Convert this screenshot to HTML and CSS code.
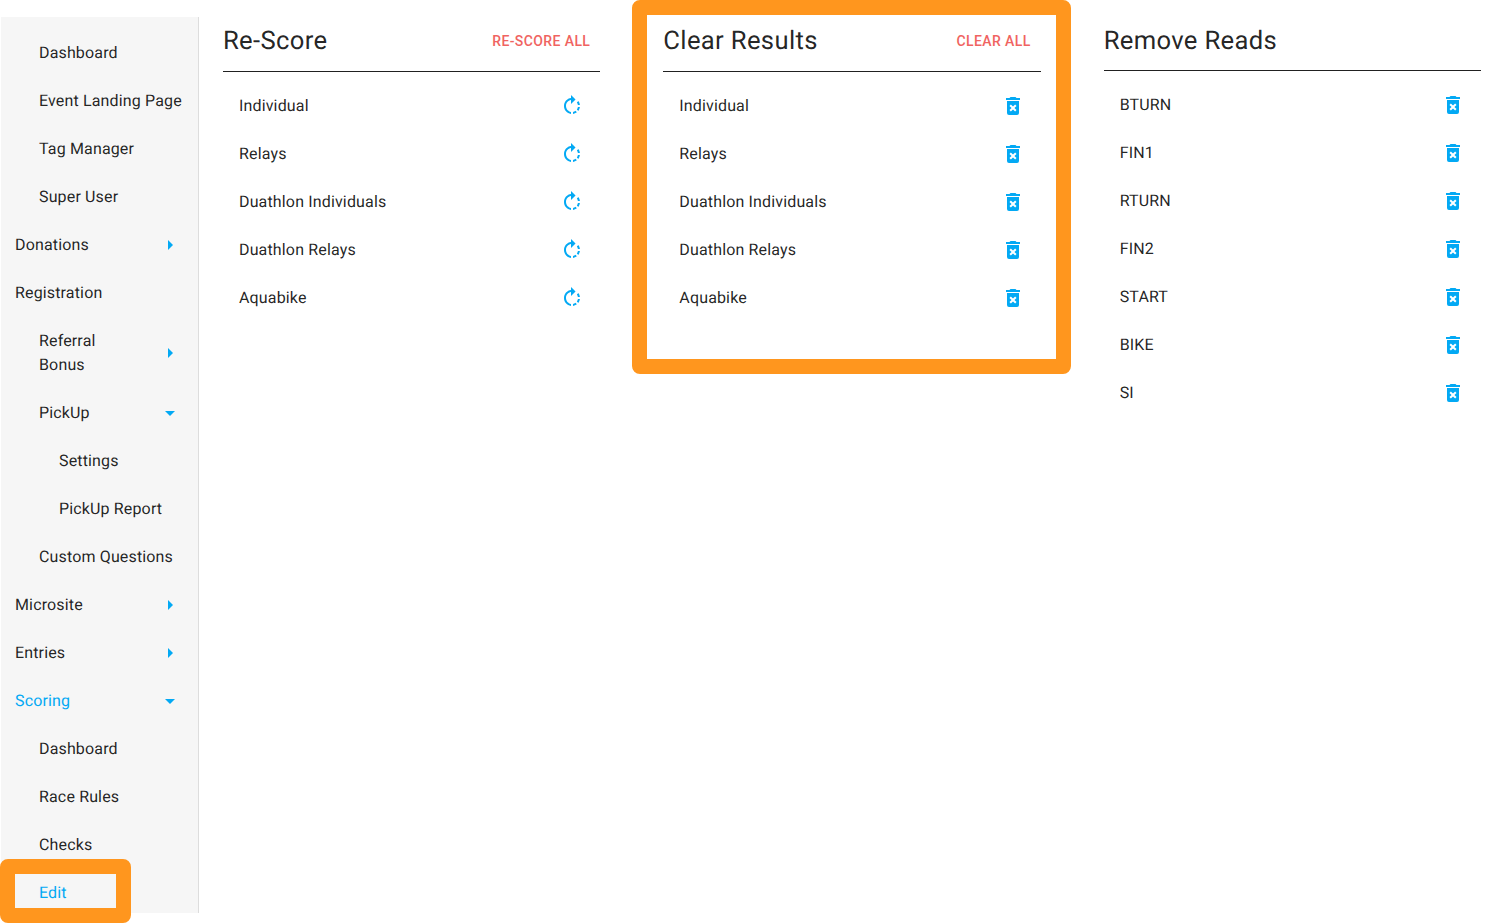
FILE: index.html
```html
<!DOCTYPE html>
<html lang="en">
<head>
<meta charset="utf-8">
<title>Scoring Edit</title>
<link rel="stylesheet" href="styles.css">
</head>
<body>
<svg class="defs" aria-hidden="true">
  <symbol id="i-right" viewBox="0 0 24 24"><path d="M10,17L15,12L10,7V17Z"/></symbol>
  <symbol id="i-down" viewBox="0 0 24 24"><path d="M7,10L12,15L17,10H7Z"/></symbol>
  <symbol id="i-rotate" viewBox="0 0 24 24"><path d="M16.89,15.5L18.31,16.89C19.21,15.73 19.76,14.39 19.93,13H17.91C17.77,13.87 17.43,14.72 16.89,15.5M13,17.9V19.92C14.39,19.75 15.74,19.21 16.9,18.31L15.46,16.87C14.71,17.41 13.87,17.76 13,17.9M19.93,11C19.76,9.61 19.21,8.27 18.31,7.11L16.89,8.53C17.43,9.28 17.77,10.13 17.91,11M15.55,5.55L11,1V4.07C7.06,4.56 4,7.92 4,12C4,16.08 7.05,19.44 11,19.93V17.91C8.16,17.43 6,14.97 6,12C6,9.03 8.16,6.57 11,6.09V10L15.55,5.55Z"/></symbol>
  <symbol id="i-trash" viewBox="0 0 24 24"><path d="M6,19A2,2 0 0,0 8,21H16A2,2 0 0,0 18,19V7H6V19M8.46,11.88L9.87,10.47L12,12.59L14.12,10.47L15.54,11.88L13.41,14L15.54,16.12L14.12,17.53L12,15.41L9.88,17.53L8.47,16.12L10.59,14L8.46,11.88M15.5,4L14.5,3H9.5L8.5,4H5V6H19V4H15.5Z"/></symbol>
</svg>
<div class="shell">
  <nav class="sidebar">
    <a class="nav-item lvl1">Dashboard</a>
    <a class="nav-item lvl1">Event Landing Page</a>
    <a class="nav-item lvl1">Tag Manager</a>
    <a class="nav-item lvl1">Super User</a>
    <a class="nav-item"><span class="nav-label">Donations</span><svg class="caret"><use href="#i-right"/></svg></a>
    <a class="nav-item">Registration</a>
    <a class="nav-item lvl1 tall"><span class="nav-label narrow">Referral Bonus</span><svg class="caret"><use href="#i-right"/></svg></a>
    <a class="nav-item lvl1"><span class="nav-label">PickUp</span><svg class="caret"><use href="#i-down"/></svg></a>
    <a class="nav-item lvl2">Settings</a>
    <a class="nav-item lvl2">PickUp Report</a>
    <a class="nav-item lvl1">Custom Questions</a>
    <a class="nav-item"><span class="nav-label">Microsite</span><svg class="caret"><use href="#i-right"/></svg></a>
    <a class="nav-item"><span class="nav-label">Entries</span><svg class="caret"><use href="#i-right"/></svg></a>
    <a class="nav-item active"><span class="nav-label">Scoring</span><svg class="caret"><use href="#i-down"/></svg></a>
    <a class="nav-item lvl1">Dashboard</a>
    <a class="nav-item lvl1">Race Rules</a>
    <a class="nav-item lvl1">Checks</a>
    <a class="nav-item lvl1 active">Edit</a>
  </nav>
  <main class="panels">
    <section class="panel">
      <header class="panel-head"><h2>Re-Score</h2><button class="action">Re-Score All</button></header>
      <ul class="rows">
        <li class="row">Individual<svg class="row-icon"><use href="#i-rotate"/></svg></li>
        <li class="row">Relays<svg class="row-icon"><use href="#i-rotate"/></svg></li>
        <li class="row">Duathlon Individuals<svg class="row-icon"><use href="#i-rotate"/></svg></li>
        <li class="row">Duathlon Relays<svg class="row-icon"><use href="#i-rotate"/></svg></li>
        <li class="row">Aquabike<svg class="row-icon"><use href="#i-rotate"/></svg></li>
      </ul>
    </section>
    <section class="panel">
      <header class="panel-head"><h2>Clear Results</h2><button class="action">Clear All</button></header>
      <ul class="rows">
        <li class="row">Individual<svg class="row-icon"><use href="#i-trash"/></svg></li>
        <li class="row">Relays<svg class="row-icon"><use href="#i-trash"/></svg></li>
        <li class="row">Duathlon Individuals<svg class="row-icon"><use href="#i-trash"/></svg></li>
        <li class="row">Duathlon Relays<svg class="row-icon"><use href="#i-trash"/></svg></li>
        <li class="row">Aquabike<svg class="row-icon"><use href="#i-trash"/></svg></li>
      </ul>
    </section>
    <section class="panel">
      <header class="panel-head plain"><h2>Remove Reads</h2></header>
      <ul class="rows">
        <li class="row">BTURN<svg class="row-icon"><use href="#i-trash"/></svg></li>
        <li class="row">FIN1<svg class="row-icon"><use href="#i-trash"/></svg></li>
        <li class="row">RTURN<svg class="row-icon"><use href="#i-trash"/></svg></li>
        <li class="row">FIN2<svg class="row-icon"><use href="#i-trash"/></svg></li>
        <li class="row">START<svg class="row-icon"><use href="#i-trash"/></svg></li>
        <li class="row">BIKE<svg class="row-icon"><use href="#i-trash"/></svg></li>
        <li class="row">SI<svg class="row-icon"><use href="#i-trash"/></svg></li>
      </ul>
    </section>
  </main>
  <div class="highlight hl-edit"></div>
  <div class="highlight hl-clear"></div>
</div>
</body>
</html>
```
FILE: styles.css
```css
* { box-sizing: border-box; }
html, body { margin: 0; padding: 0; background: #fff; }
body {
  font-family: Roboto, "Liberation Sans", sans-serif;
  font-size: 16px;
  letter-spacing: 0.15px;
  text-rendering: geometricPrecision;
  color: rgba(0, 0, 0, 0.87);
  height: 924px;
  overflow: hidden;
}
.defs { position: absolute; width: 0; height: 0; }
.shell { position: relative; display: flex; align-items: flex-start; height: 924px; }

.sidebar {
  flex: 0 0 198px;
  height: 896px;
  margin: 17px 0 0 1px;
  padding-top: 11px;
  background: #f6f6f6;
  border-right: 1px solid #ddd;
  overflow: hidden;
}
.nav-item {
  display: flex;
  align-items: center;
  min-height: 48px;
  padding: 2px 16px 0 14px;
  line-height: 24px;
}
.nav-item.lvl1 { padding-left: 38px; }
.nav-item.lvl2 { padding-left: 58px; }
.nav-item.tall { min-height: 72px; }
.nav-item.active { color: #03a9f4; }
.nav-label { flex: 1; }
.nav-label.narrow { flex: 0 0 70px; margin-right: auto; }
.caret { flex: none; width: 24px; height: 24px; fill: #03a9f4; margin-left: auto; }

.panels {
  flex: 1;
  display: grid;
  grid-template-columns: repeat(3, 1fr);
  column-gap: 63px;
  padding: 0 12px 0 24px;
}
.panel-head {
  display: flex;
  align-items: center;
  justify-content: space-between;
  height: 72px;
  padding: 11px 10px 0 0;
  border-bottom: 1px solid rgba(0, 0, 0, 0.87);
}
.panel-head.plain { height: 71px; padding-top: 11px; }
.panel-head h2 {
  margin: 0;
  font-size: 25.6px;
  font-weight: 400;
  letter-spacing: 0.35px;
}
.action {
  padding: 0;
  border: 0;
  background: none;
  font: 500 14px Roboto, "Liberation Sans", sans-serif;
  letter-spacing: 0.4px;
  text-transform: uppercase;
  color: #ef5350;
  opacity: 0.9;
}
.rows { list-style: none; margin: 9px 0 0; padding: 0; }
.row {
  display: flex;
  align-items: center;
  justify-content: space-between;
  height: 48px;
  padding: 0 16px;
}
.row-icon { width: 24px; height: 24px; fill: #03a9f4; margin-top: 2px; }

.highlight {
  position: absolute;
  border: 15px solid #ff961e;
  border-radius: 8px;
}
.hl-edit { left: 0; top: 859px; width: 131px; height: 64px; }
.hl-clear { left: 632px; top: 0; width: 439px; height: 374px; }
```
